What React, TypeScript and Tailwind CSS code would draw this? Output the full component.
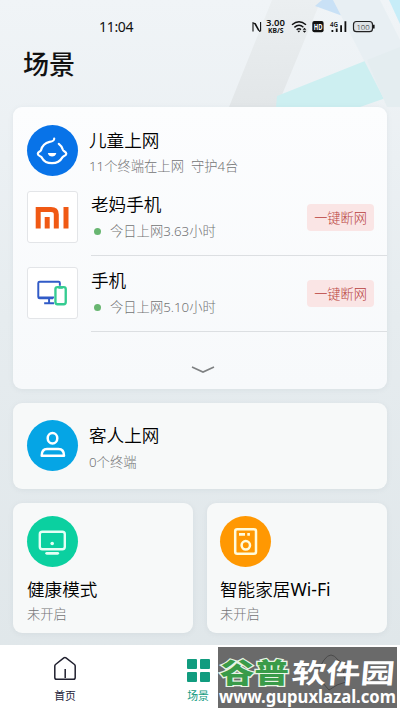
import React from 'react';

type DeviceProps = { name: string; usage: string; icon: React.ReactNode };

function Device({ name, usage, icon }: DeviceProps) {
  return (
    <div className="flex h-[76px] pl-[14px]">
      <div className="mt-[11px] flex h-[52px] w-[51px] shrink-0 items-center justify-center rounded-[3px] border border-[#e3e5e8] bg-white">
        {icon}
      </div>
      <div className="ml-[13px] flex flex-1 justify-between border-b border-[#dcdfe2] pr-[13px]">
        <div className="pt-[12px]">
          <div className="h-[24px] text-[17.6px] leading-[24px] font-[350] text-black">{name}</div>
          <div className="mt-[5px] flex h-[20px] items-center text-[13.3px] leading-[20px] text-[#737475]">
            <span className="mr-[9px] ml-[3px] h-[7px] w-[7px] rounded-full bg-[#68b671]" />
            {usage}
          </div>
        </div>
        <div className="mt-[24px] h-[27px] w-[67px] rounded-[4px] bg-[#fae5e5] text-center text-[13.2px] leading-[28px] text-[#b8403c]">
          一键断网
        </div>
      </div>
    </div>
  );
}

function StatusIcons() {
  return (
    <svg width="126" height="22" viewBox="250 16 126 22" className="block" fontFamily='"Noto Sans", sans-serif' fill="#111">
      <path d="M253 31.5V22.8L254.6 23.4L258.6 30.6M255.2 23.2L259.6 31.4L260.6 31V22" fill="none" stroke="#111" strokeWidth="1.1" />
      <text x="266" y="26.3" fontSize="9" fontWeight="600" textLength="19" lengthAdjust="spacingAndGlyphs">3.00</text>
      <text x="268" y="33.3" fontSize="6.5" fontWeight="700" textLength="15.5" lengthAdjust="spacingAndGlyphs">KB/S</text>
      <g fill="none" stroke="#111" strokeWidth="1.4">
        <path d="M292 24.7Q299 18.6 306 24.7M294.4 27.4Q299 23.4 303.4 27.2M296.6 29.8Q299 27.9 301 29.6" />
      </g>
      <path d="M297.3 30.8h3L298.8 32.5zM302.6 29.7l1.9-2 1.9 2zM302.6 30.8l1.9 2 1.9-2z" />
      <rect x="312.3" y="21" width="11.3" height="11.3" rx="2" />
      <text x="313.7" y="29.8" fontSize="8" fontWeight="700" fill="white" textLength="8.7" lengthAdjust="spacingAndGlyphs">HD</text>
      <text x="330" y="26.7" fontSize="7" fontWeight="600" textLength="8" lengthAdjust="spacingAndGlyphs">4G</text>
      <path d="M331.5 30h1.8v2h-1.8zM335.8 28.5h1.8V32h-1.8zM340.2 25.2h1.8V32h-1.8zM344.5 21.2h1.8V32h-1.8z" />
      <rect x="353.5" y="21.5" width="19" height="10.2" rx="3" fill="#dde2e6" stroke="#222" strokeWidth="1.2" />
      <path d="M373 24.8h1.6v3.7H373z" />
      <text x="356.4" y="29.6" fontSize="8" fill="#222" textLength="13.4" lengthAdjust="spacingAndGlyphs">100</text>
    </svg>
  );
}

function Backdrop() {
  return (
    <svg className="absolute top-0 right-0 h-[160px] w-[200px]" viewBox="200 0 200 160">
      <defs>
        <linearGradient id="beam" x1="0" x2="0" y1="0" y2="1">
          <stop offset="0" stopColor="#ebeff1" />
          <stop offset="1" stopColor="#e2e6e8" />
        </linearGradient>
      </defs>
      <path d="M272 0h49L277 107h-48z" fill="url(#beam)" />
      <path d="M277 96L400 47v46L360 107h-84z" fill="#cdeff1" />
      <path d="M322 0h17l12 19-36-13z" fill="#c9e1f6" />
      <path d="M333 0h47l20 40v67h-12z" fill="#e8eff3" />
      <path d="M389 0h11v24z" fill="#c7edf8" />
      <path d="M367 60L400 47v60h-13z" fill="#e4edf0" />
    </svg>
  );
}

const circle = 'flex h-[51px] w-[51px] shrink-0 items-center justify-center rounded-full';
const card = 'rounded-[9px] shadow-[0_1px_5px_rgba(130,150,160,0.12)]';
const title = 'h-[24px] text-[17.6px] leading-[24px] font-[350] text-black';
const sub = 'h-[20px] text-[13.3px] leading-[20px] text-[#737475] whitespace-pre';

export default function App() {
  return (
    <div className="relative flex h-[711px] w-[400px] flex-col overflow-hidden bg-linear-to-b from-[#f0f4f7] via-[#e6ecef] via-45% to-[#dfe6e9] font-['Noto_Sans','Noto_Sans_CJK_SC',sans-serif] font-light">
      <Backdrop />
      <div className="relative flex h-[48px] items-start justify-between pr-[24px] pl-[99px]">
        <div className="pt-[16px] text-[14px] leading-[22px] font-normal text-[#111] [letter-spacing:-0.3px]">11:04</div>
        <div className="pt-[16px]"><StatusIcons /></div>
      </div>
      <h1 className="relative h-[59px] pl-[23px] text-[26px] leading-[33px] font-medium text-[#111]">场景</h1>

      <main className="relative flex h-[538px] flex-col px-[13px]">
        <section className={`${card} h-[282px] bg-linear-to-b from-[#fcfdfe] to-[#f7f9fb]`}>
          <div className="flex h-[73px] pt-[18px] pl-[14px]">
            <div className={`${circle} bg-[#0873e8]`}>
              <svg width="51" height="51" viewBox="27 125 51 51" fill="none" stroke="white" strokeWidth="2.2" strokeLinecap="round">
                <path d="M54.2 138.6C54.3 140.8 53 141.3 49.5 141.9C45 143 42 146.5 41 150.2C40.6 151.6 37.8 151.6 37.8 153.7C37.8 155.8 40.8 156 41.7 157.4C43.6 161.2 47.5 163.2 52 163.2C56.6 163.2 60.4 161 62.4 157.4C63.2 156 66.3 155.8 66.3 153.7C66.3 151.6 63.5 151.6 63 150C62.3 147.5 61 145.3 58.8 143.8" />
                <path d="M47.8 153h8.5c-.7 4.7-7.7 4.7-8.5 0z" fill="white" stroke="none" />
              </svg>
            </div>
            <div className="ml-[11px] pt-[3px]">
              <div className={title}>儿童上网</div>
              <div className={`${sub} mt-[4px]`}>11个终端在上网  守护4台</div>
            </div>
          </div>
          <Device
            name="老妈手机"
            usage="今日上网3.63小时"
            icon={
              <svg width="35" height="24" viewBox="0 0 35 24" fill="none" stroke="#f05914" strokeWidth="5">
                <path d="M3.2 23.5V4.6H16Q21.3 4.6 21.3 9.5V23.5M12.2 12v11.5M31 2.1v21.4" />
              </svg>
            }
          />
          <Device
            name="手机"
            usage="今日上网5.10小时"
            icon={
              <svg width="51" height="50" viewBox="27 267 51 51" fill="none" strokeWidth="2" className="shrink-0">
                <path d="M60 285V282.3Q60 281 58.8 281H39.5Q38 281 38 282.4V296.5Q38 298 39.5 298H53M38 297h16M49 298v5M44 303h10" stroke="#315bc7" />
                <rect x="55.5" y="286.5" width="10.5" height="17.5" rx="2" stroke="#35cc91" strokeWidth="2.4" fill="white" />
                <path d="M58.5 287h4.5" stroke="#35cc91" strokeWidth="2.4" />
              </svg>
            }
          />
          <svg width="24" height="10" viewBox="0 0 24 10" className="mt-[33px] ml-[178px]" fill="none" stroke="#7e8082" strokeWidth="1.6">
            <path d="M1 2L12 7L23 2" />
          </svg>
        </section>

        <section className={`${card} mt-[14px] flex h-[86px] bg-[#f7f9f9] pt-[17px] pl-[14px]`}>
          <div className={`${circle} bg-[#05a5e5]`}>
            <svg width="51" height="51" viewBox="27 420 51 51" fill="none" stroke="white" strokeWidth="2.5">
              <ellipse cx="52.5" cy="438.3" rx="4.8" ry="5.2" />
              <path d="M47 449H58.5Q64 449 64 455.8H41.7Q41.7 449 47 449z" strokeLinejoin="round" />
            </svg>
          </div>
          <div className="ml-[11px] pt-[3px]">
            <div className={title}>客人上网</div>
            <div className={`${sub} mt-[5px]`}>0个终端</div>
          </div>
        </section>

        <div className="mt-[14px] grid grid-cols-2 gap-[14px]">
          <section className={`${card} h-[130px] bg-[#f7f9f9] pt-[13px] pl-[14px]`}>
            <div className={`${circle} bg-[#0bd0a0]`}>
              <svg width="51" height="51" viewBox="27 516 51 51" fill="none" stroke="#e5fff5" strokeWidth="2.4">
                <rect x="39.8" y="531.7" width="25" height="17.5" rx="2.5" />
                <path d="M46.7 553.3h11" strokeWidth="2.8" strokeLinecap="round" />
                <circle cx="52.2" cy="543.5" r="1.8" fill="#e5fff5" stroke="none" />
              </svg>
            </div>
            <div className={`${title} mt-[10px]`}>健康模式</div>
            <div className={`${sub} mt-[3px]`}>未开启</div>
          </section>
          <section className={`${card} h-[130px] bg-[#f7f9f9] pt-[13px] pl-[13px]`}>
            <div className={`${circle} bg-[#ff9802]`}>
              <svg width="51" height="51" viewBox="220 516 51 51" fill="none" stroke="#fffbdc" strokeWidth="2.5">
                <rect x="235.2" y="529.2" width="20.8" height="24.6" rx="2" />
                <circle cx="245.8" cy="545.3" r="4.2" />
                <path d="M239 534.4h6M247.3 534.4h2.6" strokeWidth="2.6" />
              </svg>
            </div>
            <div className={`${title} mt-[10px]`}>智能家居<span className="font-normal">Wi-Fi</span></div>
            <div className={`${sub} mt-[3px]`}>未开启</div>
          </section>
        </div>
      </main>

      <nav className="relative grid h-[66px] shrink-0 grid-cols-[131px_136px_133px] bg-white text-[10.8px] leading-[16px] font-normal">
        <div className="flex flex-col items-center pt-[11px] pr-[1px] text-[#222238]">
          <svg width="24" height="26" viewBox="0 0 24 26" fill="none" stroke="#20202f" strokeWidth="1.5" strokeLinejoin="round">
            <path d="M1.8 10Q1.8 9.2 2.5 8.5L10.8 1.9Q11.9 1.1 13 1.9L21.5 8.5Q22.2 9.2 22.2 10V21.5Q22.2 23.3 20.4 23.3H3.6Q1.8 23.3 1.8 21.5zM12.2 13v9" />
          </svg>
          <span className="mt-[6px]">首页</span>
        </div>
        <div className="flex flex-col items-center pt-[14px] pr-[2px] text-[#129b80]">
          <div className="grid grid-cols-[10px_10px] gap-[3px]">
            {[0, 1, 2, 3].map((i) => (
              <span key={i} className="h-[10px] rounded-[1px] bg-[#119c7f]" />
            ))}
          </div>
          <span className="mt-[6px]">场景</span>
        </div>
      </nav>

      {/* Site badge floating over the last tab */}
      <div className="absolute top-[647px] left-[218px] h-[61px] w-[179px] bg-[#6a6a6a]">
        <svg width="179" height="61" viewBox="218 647 179 61" fontFamily='"Noto Sans CJK SC", sans-serif'>
          <path d="M324 660q7-10 14 0l8 5-3 9 3 8-9 3-8 5-7-8-8-5 5-9z" fill="none" stroke="#4a4a4a" />
          <g fontSize="29" fontWeight="900">
            <text transform="translate(220 683) scale(1 .93)" fill="#399b49" stroke="#e8f4e5" strokeWidth="2.6" paintOrder="stroke" textLength="69" lengthAdjust="spacingAndGlyphs">谷普</text>
            <text transform="translate(291 683) skewX(-5) scale(1 .93)" fill="white" fontWeight="700" textLength="103" lengthAdjust="spacingAndGlyphs">软件园</text>
          </g>
          <text x="219" y="702.5" fill="white" fontFamily='"Noto Sans", sans-serif' fontSize="17.5" fontWeight="700" textLength="177" lengthAdjust="spacingAndGlyphs">www.gupuxlazal.com</text>
        </svg>
      </div>
    </div>
  );
}
